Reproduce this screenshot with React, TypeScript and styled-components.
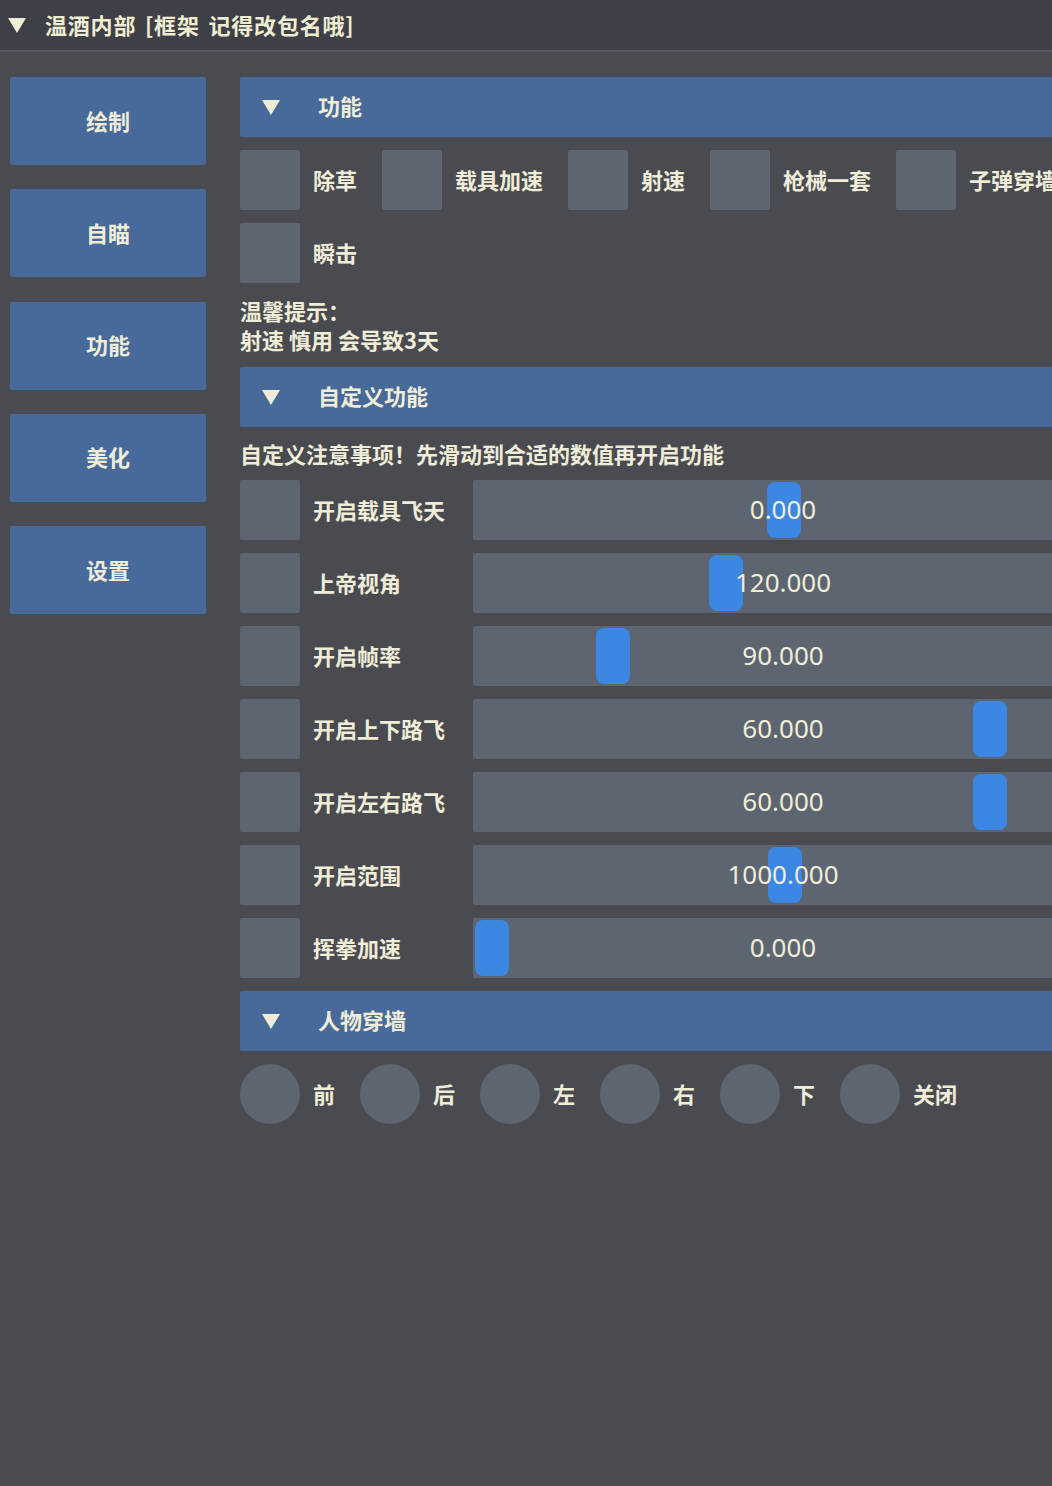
import React from 'react';
import styled, { createGlobalStyle } from 'styled-components';

const palette = {
  bg: '#4a4a51',
  titleBar: '#3f4047',
  blue: '#476a9a',
  frame: '#5c6570',
  grab: '#3c86e4',
  text: '#efedd8',
};

const tabs = ['绘制', '自瞄', '功能', '美化', '设置'];
const toggles = [['除草', '载具加速', '射速', '枪械一套', '子弹穿墙'], ['瞬击']];
const sliders = [
  { label: '开启载具飞天', value: '0.000', pos: 0.502 },
  { label: '上帝视角', value: '120.000', pos: 0.402 },
  { label: '开启帧率', value: '90.000', pos: 0.208 },
  { label: '开启上下路飞', value: '60.000', pos: 0.856 },
  { label: '开启左右路飞', value: '60.000', pos: 0.856 },
  { label: '开启范围', value: '1000.000', pos: 0.504 },
  { label: '挥拳加速', value: '0.000', pos: 0 },
];
const directions = ['前', '后', '左', '右', '下', '关闭'];

const GRAB_TRAVEL = 582;

const App: React.FC = () => {
  return (
    <Window>
      <GlobalStyle />
      <TitleBar>
        <Arrow />
        <TitleText>温酒内部 [框架 记得改包名哦]</TitleText>
      </TitleBar>
      <Body>
        <Sidebar>
          {tabs.map((t) => (
            <NavButton key={t}>{t}</NavButton>
          ))}
        </Sidebar>
        <Content>
          <SectionHeader>
            <Arrow />
            <HeaderText>功能</HeaderText>
          </SectionHeader>
          {toggles.map((row, i) => (
            <ItemRow key={i}>
              {row.map((label) => (
                <Item key={label}>
                  <Check />
                  <Label>{label}</Label>
                </Item>
              ))}
            </ItemRow>
          ))}
          <Note>
            温馨提示：
            <br />
            射速 慎用 会导致3天
          </Note>
          <SectionHeader>
            <Arrow />
            <HeaderText>自定义功能</HeaderText>
          </SectionHeader>
          <Note $tight>自定义注意事项！先滑动到合适的数值再开启功能</Note>
          {sliders.map((s) => (
            <SliderRow key={s.label}>
              <Check />
              <SliderLabel>{s.label}</SliderLabel>
              <SliderFrame>
                <Grab style={{ left: 2 + s.pos * GRAB_TRAVEL }} />
                <SliderValue>{s.value}</SliderValue>
              </SliderFrame>
            </SliderRow>
          ))}
          <SectionHeader>
            <Arrow />
            <HeaderText>人物穿墙</HeaderText>
          </SectionHeader>
          <ItemRow>
            {directions.map((d) => (
              <Item key={d}>
                <Radio />
                <Label>{d}</Label>
              </Item>
            ))}
          </ItemRow>
        </Content>
      </Body>
    </Window>
  );
};

const GlobalStyle = createGlobalStyle`
  html, body {
    margin: 0;
    padding: 0;
    background: ${palette.bg};
    overflow: hidden;
  }
  body {
    font-family: "Noto Sans CJK SC", "Noto Sans", sans-serif;
    color: ${palette.text};
  }
`;

const Window = styled.div`
  width: 1052px;
  height: 1486px;
  overflow: hidden;
  display: flex;
  flex-direction: column;
  background: ${palette.bg};
`;

const TitleBar = styled.div`
  height: 50px;
  flex-shrink: 0;
  display: flex;
  align-items: center;
  gap: 19px;
  padding-left: 8px;
  background: ${palette.titleBar};
  border-bottom: 2px solid #55565d;
`;

const Arrow = styled.span`
  width: 0;
  height: 0;
  border-left: 9px solid transparent;
  border-right: 9px solid transparent;
  border-top: 15px solid ${palette.text};
  flex-shrink: 0;
`;

const TitleText = styled.span`
  font-size: 22px;
  font-weight: 700;
  letter-spacing: 0.8px;
  word-spacing: 3px;
  white-space: nowrap;
  color: #eeedd2;
  margin-top: -3px;
`;

const Body = styled.div`
  display: flex;
  gap: 34px;
  padding: 25px 0 0 10px;
`;

const Sidebar = styled.div`
  width: 196px;
  flex-shrink: 0;
  display: flex;
  flex-direction: column;
  gap: 24.3px;
`;

const NavButton = styled.div`
  height: 88px;
  display: flex;
  align-items: center;
  justify-content: center;
  padding-bottom: 3px;
  box-sizing: border-box;
  background: ${palette.blue};
  border-radius: 2px;
  font-size: 22px;
  font-weight: 700;
`;

const Content = styled.div`
  width: 853px;
  flex-shrink: 0;
  display: flex;
  flex-direction: column;
  gap: 13px;
`;

const SectionHeader = styled.div`
  height: 60px;
  display: flex;
  align-items: center;
  padding-left: 22px;
  background: ${palette.blue};
  border-radius: 2px;
`;

const HeaderText = styled.span`
  margin-left: 38px;
  margin-top: -4px;
  font-size: 22px;
  font-weight: 700;
`;

const ItemRow = styled.div`
  display: flex;
  gap: 25px;
  white-space: nowrap;
`;

const Item = styled.div`
  display: flex;
  align-items: center;
  gap: 13px;
  flex-shrink: 0;
`;

const Check = styled.div`
  width: 60px;
  height: 60px;
  flex-shrink: 0;
  background: ${palette.frame};
  border-radius: 2px;
`;

const Radio = styled(Check)`
  border-radius: 50%;
`;

const Label = styled.span`
  font-size: 22px;
  font-weight: 700;
  margin-top: -3px;
`;

const Note = styled.div<{ $tight?: boolean }>`
  font-size: 22px;
  font-weight: 700;
  line-height: ${({ $tight }) => ($tight ? '27px' : '29px')};
  white-space: nowrap;
`;

const SliderRow = styled.div`
  display: flex;
  align-items: center;
`;

const SliderLabel = styled(Label)`
  width: 160px;
  margin-left: 13px;
  white-space: nowrap;
`;

const SliderFrame = styled.div`
  position: relative;
  width: 620px;
  height: 60px;
  flex-shrink: 0;
  display: flex;
  align-items: center;
  justify-content: center;
  background: ${palette.frame};
  border-radius: 2px;
`;

const Grab = styled.div`
  position: absolute;
  top: 2px;
  width: 34px;
  height: 56px;
  border-radius: 8px;
  background: ${palette.grab};
`;

const SliderValue = styled.span`
  position: relative;
  margin-top: -2px;
  font-family: "Noto Sans", sans-serif;
  font-size: 26px;
  font-weight: 400;
`;

export default App;
